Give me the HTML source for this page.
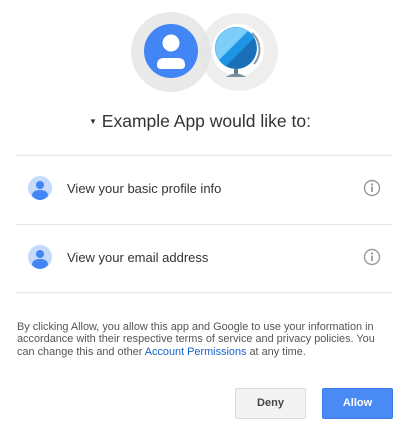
<!DOCTYPE html>
<html><head><style>
body{margin:0;width:414px;height:438px;background:#fff;font-family:"Liberation Sans",Arial,sans-serif;position:relative;overflow:hidden}
.a{position:absolute}
.line{position:absolute;left:16px;width:376px;height:1px;background:#e6e6e6}
.row{position:absolute;left:67px;font-size:13px;color:#333}
.btn{position:absolute;top:388px;height:30px;width:70px;border-radius:2px;font-size:11px;font-weight:bold;text-align:center;line-height:30px}
</style></head><body>
<svg class="a" style="left:0;top:0" width="414" height="100">
<circle cx="239" cy="52" r="39" fill="#eeeeee"/>
<circle cx="171" cy="52" r="40" fill="#e4e4e4" fill-opacity="0.8"/>
<circle cx="171" cy="51" r="27" fill="#4285f4"/>
<circle cx="171" cy="43" r="8.5" fill="#fff"/>
<path d="M157 65 Q157 58 164 58 L178 58 Q185 58 185 65 Q185 69 181 69 L161 69 Q157 69 157 65Z" fill="#fff"/>
<circle cx="238" cy="50" r="26" fill="#fff"/>
<circle cx="236" cy="48" r="21" fill="#1e96e6"/>
<path d="M219 60 L248 31 A21 21 0 0 0 222 33 A21 21 0 0 0 219 60Z" fill="#7ccdf7"/>
<path d="M226 66 L254 38 A21 21 0 0 1 245 67 A21 21 0 0 1 226 66Z" fill="#1a70b8"/>
<path d="M252 33 A22 22 0 0 1 254 64" stroke="#8a9aa5" stroke-width="2" fill="none"/>
<rect x="234" y="69" width="4" height="5" fill="#607d8b"/>
<path d="M226 77 Q236 70 246 77Z" fill="#78909c"/>
</svg>
<div class="a" style="left:89px;top:111px;font-size:17.5px;color:#333;white-space:nowrap"><span style="font-size:8px;position:relative;top:-3px">▼</span> Example App would like to:</div>
<div class="line" style="top:155px"></div>
<div class="line" style="top:224px"></div>
<div class="line" style="top:292px"></div>
<svg class="a" style="left:28px;top:176px" width="24" height="24"><circle cx="12" cy="12" r="12" fill="#c6dafc"/><circle cx="12" cy="9" r="4" fill="#4285f4"/><path d="M4 20 Q4 14 12 14 Q20 14 20 20 Q16 24 12 24 Q8 24 4 20Z" fill="#4285f4"/></svg>
<div class="row" style="top:181px">View your basic profile info</div>
<svg class="a" style="left:28px;top:245px" width="24" height="24"><circle cx="12" cy="12" r="12" fill="#c6dafc"/><circle cx="12" cy="9" r="4" fill="#4285f4"/><path d="M4 20 Q4 14 12 14 Q20 14 20 20 Q16 24 12 24 Q8 24 4 20Z" fill="#4285f4"/></svg>
<div class="row" style="top:250px">View your email address</div>
<svg class="a" style="left:363px;top:179px" width="18" height="18"><circle cx="9" cy="9" r="7.5" fill="none" stroke="#999" stroke-width="1.4"/><circle cx="9" cy="5.5" r="1.1" fill="#999"/><rect x="8.1" y="7.6" width="1.8" height="5.4" fill="#999"/></svg>
<svg class="a" style="left:363px;top:248px" width="18" height="18"><circle cx="9" cy="9" r="7.5" fill="none" stroke="#999" stroke-width="1.4"/><circle cx="9" cy="5.5" r="1.1" fill="#999"/><rect x="8.1" y="7.6" width="1.8" height="5.4" fill="#999"/></svg>
<div class="a" style="left:17px;top:321px;width:362px;font-size:10.9px;line-height:12.3px;color:#555">By clicking Allow, you allow this app and Google to use your information in accordance with their respective terms of service and privacy policies. You can change this and other <span style="color:#1a63c7">Account Permissions</span> at any time.</div>
<div class="btn" style="left:235px;background:#f3f3f3;border:1px solid #dcdcdc;color:#444;width:69px;height:29px;line-height:29px">Deny</div>
<div class="btn" style="left:322px;background:#4a8af4;border:1px solid #3b7ae8;color:#fff;width:69px;height:29px;line-height:29px">Allow</div>
</body></html>
